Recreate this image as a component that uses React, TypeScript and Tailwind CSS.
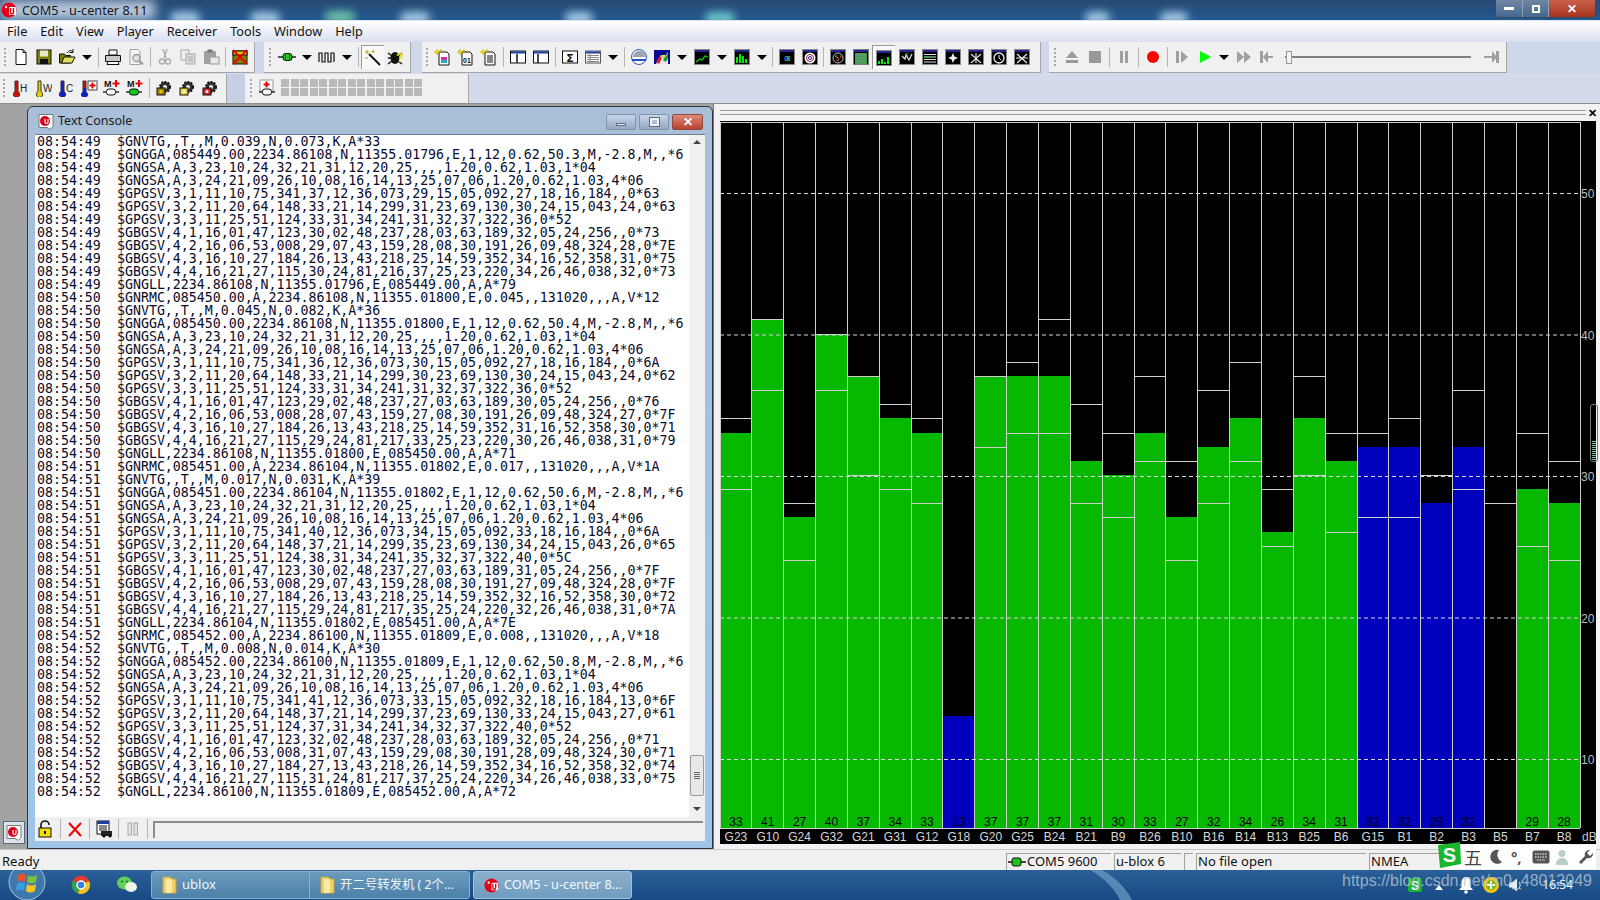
import React from "react";

const GSA1 = "$GNGSA,A,3,23,10,24,32,21,31,12,20,25,,,,1.20,0.62,1.03,1*04";
const GSA2 = "$GNGSA,A,3,24,21,09,26,10,08,16,14,13,25,07,06,1.20,0.62,1.03,4*06";

const logLines: [string, string][] = [
  ["08:54:49", "$GNVTG,,T,,M,0.039,N,0.073,K,A*33"],
  ["08:54:49", "$GNGGA,085449.00,2234.86108,N,11355.01796,E,1,12,0.62,50.3,M,-2.8,M,,*6"],
  ["08:54:49", GSA1],
  ["08:54:49", GSA2],
  ["08:54:49", "$GPGSV,3,1,11,10,75,341,37,12,36,073,29,15,05,092,27,18,16,184,,0*63"],
  ["08:54:49", "$GPGSV,3,2,11,20,64,148,33,21,14,299,31,23,69,130,30,24,15,043,24,0*63"],
  ["08:54:49", "$GPGSV,3,3,11,25,51,124,33,31,34,241,31,32,37,322,36,0*52"],
  ["08:54:49", "$GBGSV,4,1,16,01,47,123,30,02,48,237,28,03,63,189,32,05,24,256,,0*73"],
  ["08:54:49", "$GBGSV,4,2,16,06,53,008,29,07,43,159,28,08,30,191,26,09,48,324,28,0*7E"],
  ["08:54:49", "$GBGSV,4,3,16,10,27,184,26,13,43,218,25,14,59,352,34,16,52,358,31,0*75"],
  ["08:54:49", "$GBGSV,4,4,16,21,27,115,30,24,81,216,37,25,23,220,34,26,46,038,32,0*73"],
  ["08:54:49", "$GNGLL,2234.86108,N,11355.01796,E,085449.00,A,A*79"],
  ["08:54:50", "$GNRMC,085450.00,A,2234.86108,N,11355.01800,E,0.045,,131020,,,A,V*12"],
  ["08:54:50", "$GNVTG,,T,,M,0.045,N,0.082,K,A*36"],
  ["08:54:50", "$GNGGA,085450.00,2234.86108,N,11355.01800,E,1,12,0.62,50.4,M,-2.8,M,,*6"],
  ["08:54:50", GSA1],
  ["08:54:50", GSA2],
  ["08:54:50", "$GPGSV,3,1,11,10,75,341,36,12,36,073,30,15,05,092,27,18,16,184,,0*6A"],
  ["08:54:50", "$GPGSV,3,2,11,20,64,148,33,21,14,299,30,23,69,130,30,24,15,043,24,0*62"],
  ["08:54:50", "$GPGSV,3,3,11,25,51,124,33,31,34,241,31,32,37,322,36,0*52"],
  ["08:54:50", "$GBGSV,4,1,16,01,47,123,29,02,48,237,27,03,63,189,30,05,24,256,,0*76"],
  ["08:54:50", "$GBGSV,4,2,16,06,53,008,28,07,43,159,27,08,30,191,26,09,48,324,27,0*7F"],
  ["08:54:50", "$GBGSV,4,3,16,10,27,184,26,13,43,218,25,14,59,352,31,16,52,358,30,0*71"],
  ["08:54:50", "$GBGSV,4,4,16,21,27,115,29,24,81,217,33,25,23,220,30,26,46,038,31,0*79"],
  ["08:54:50", "$GNGLL,2234.86108,N,11355.01800,E,085450.00,A,A*71"],
  ["08:54:51", "$GNRMC,085451.00,A,2234.86104,N,11355.01802,E,0.017,,131020,,,A,V*1A"],
  ["08:54:51", "$GNVTG,,T,,M,0.017,N,0.031,K,A*39"],
  ["08:54:51", "$GNGGA,085451.00,2234.86104,N,11355.01802,E,1,12,0.62,50.6,M,-2.8,M,,*6"],
  ["08:54:51", GSA1],
  ["08:54:51", GSA2],
  ["08:54:51", "$GPGSV,3,1,11,10,75,341,40,12,36,073,34,15,05,092,33,18,16,184,,0*6A"],
  ["08:54:51", "$GPGSV,3,2,11,20,64,148,37,21,14,299,35,23,69,130,34,24,15,043,26,0*65"],
  ["08:54:51", "$GPGSV,3,3,11,25,51,124,38,31,34,241,35,32,37,322,40,0*5C"],
  ["08:54:51", "$GBGSV,4,1,16,01,47,123,30,02,48,237,27,03,63,189,31,05,24,256,,0*7F"],
  ["08:54:51", "$GBGSV,4,2,16,06,53,008,29,07,43,159,28,08,30,191,27,09,48,324,28,0*7F"],
  ["08:54:51", "$GBGSV,4,3,16,10,27,184,26,13,43,218,25,14,59,352,32,16,52,358,30,0*72"],
  ["08:54:51", "$GBGSV,4,4,16,21,27,115,29,24,81,217,35,25,24,220,32,26,46,038,31,0*7A"],
  ["08:54:51", "$GNGLL,2234.86104,N,11355.01802,E,085451.00,A,A*7E"],
  ["08:54:52", "$GNRMC,085452.00,A,2234.86100,N,11355.01809,E,0.008,,131020,,,A,V*18"],
  ["08:54:52", "$GNVTG,,T,,M,0.008,N,0.014,K,A*30"],
  ["08:54:52", "$GNGGA,085452.00,2234.86100,N,11355.01809,E,1,12,0.62,50.8,M,-2.8,M,,*6"],
  ["08:54:52", GSA1],
  ["08:54:52", GSA2],
  ["08:54:52", "$GPGSV,3,1,11,10,75,341,41,12,36,073,33,15,05,092,32,18,16,184,13,0*6F"],
  ["08:54:52", "$GPGSV,3,2,11,20,64,148,37,21,14,299,37,23,69,130,33,24,15,043,27,0*61"],
  ["08:54:52", "$GPGSV,3,3,11,25,51,124,37,31,34,241,34,32,37,322,40,0*52"],
  ["08:54:52", "$GBGSV,4,1,16,01,47,123,32,02,48,237,28,03,63,189,32,05,24,256,,0*71"],
  ["08:54:52", "$GBGSV,4,2,16,06,53,008,31,07,43,159,29,08,30,191,28,09,48,324,30,0*71"],
  ["08:54:52", "$GBGSV,4,3,16,10,27,184,27,13,43,218,26,14,59,352,34,16,52,358,32,0*74"],
  ["08:54:52", "$GBGSV,4,4,16,21,27,115,31,24,81,217,37,25,24,220,34,26,46,038,33,0*75"],
  ["08:54:52", "$GNGLL,2234.86100,N,11355.01809,E,085452.00,A,A*72"],
];

// name, value, colour (g / b / k), upper marker, lower marker (dB)
const sats: [string, number, string, number, number][] = [
  ["G23", 33, "g", 34, 29], ["G10", 41, "g", 41, 36], ["G24", 27, "g", 28, 24],
  ["G32", 40, "g", 40, 36], ["G21", 37, "g", 37, 30], ["G31", 34, "g", 35, 29],
  ["G12", 33, "g", 34, 28], ["G18", 13, "b", 0, 0], ["G20", 37, "g", 37, 32],
  ["G25", 37, "g", 38, 33], ["B24", 37, "g", 41, 33], ["B21", 31, "g", 35, 28],
  ["B9", 30, "g", 33, 27], ["B26", 33, "g", 37, 31], ["B10", 27, "g", 31, 24],
  ["B16", 32, "g", 36, 28], ["B14", 34, "g", 38, 31], ["B13", 26, "g", 29, 25],
  ["B25", 34, "g", 37, 30], ["B6", 31, "g", 33, 26], ["G15", 32, "b", 33, 27],
  ["B1", 32, "b", 34, 27], ["B2", 28, "b", 30, 0], ["B3", 32, "b", 36, 29],
  ["B5", 0, "k", 28, 0], ["B7", 29, "g", 33, 25], ["B8", 28, "g", 31, 24],
];

const dbY = (v: number) => Math.round(475 - (v - 30) * 14.15);
const sans = "font-['Liberation_Sans',Arial,sans-serif]";
const ui = "font-['Noto_Sans',sans-serif]";

const Ico = ({ children, w = 18 }: { children: React.ReactNode; w?: number }) => (
  <svg width={w} height={18} viewBox={`0 0 ${w} 18`} className="block">
    {children}
  </svg>
);

const Btn = ({ children, active }: { children: React.ReactNode; active?: boolean }) => (
  <div className={`w-[23px] h-[24px] shrink-0 flex items-center justify-center ${active ? "border-t border-l border-[#9a9a9a] bg-[#f8f8f8]" : ""}`}>
    {children}
  </div>
);
const Arrow = () => (
  <div className="w-[17px] shrink-0 flex justify-center">
    <div className="w-0 h-0 border-x-[5px] border-x-transparent border-t-[5px] border-t-black" />
  </div>
);
const Sep = ({ narrow }: { narrow?: boolean }) => (
  <div className={`${narrow ? "w-[5px]" : "w-[6px]"} h-[20px] shrink-0 flex justify-center`}>
    <div className="w-px h-full bg-[#b4b4b4]" />
  </div>
);
const Grip = ({ w }: { w: string }) => (
  <div className={`${w} shrink-0 flex justify-center`}>
    <div className="w-[2px] h-[18px] border-l-2 border-dotted border-[#a8a8a8]" />
  </div>
);

const Thermo = ({ c, label }: { c: string; label: string }) => (
  <Ico>
    <path d="M4 2h3v10.5a3.2 3.2 0 1 1-3 0z" fill={c} stroke="#333" strokeWidth="1" />
    <text x="9" y="13" fontSize="10" fill="#222" fontFamily="Liberation Sans">{label}</text>
  </Ico>
);
const Res = ({ c = "#0c0", x = 0, y = 9 }: { c?: string; x?: number; y?: number }) => (
  <g transform={`translate(${x} ${y})`}>
    <path d="M0 4h16" stroke="#222" strokeWidth="1.4" />
    <rect x="3.5" y="1" width="9" height="6" rx="2.5" fill={c} stroke="#111" />
  </g>
);
const MPlus = ({ c }: { c: string }) => (
  <Ico>
    <text x="1" y="8" fontSize="9" fontWeight="700" fill="#111" fontFamily="Liberation Sans">M</text>
    <path d="M13 1v7M9.5 4.500h7" stroke="#e00" strokeWidth="2" />
    <Res c={c} y={9} />
  </Ico>
);
const Gear = ({ c, dot }: { c: string; dot: string }) => (
  <Ico>
    <circle cx="10" cy="8" r="5" fill="#333" stroke="#111" strokeWidth="2" strokeDasharray="2 1.2" />
    <circle cx="10" cy="8" r="2" fill="#eee" />
    <rect x="2" y="9" width="8" height="7" fill={c} stroke="#111" />
    <circle cx="6" cy="12.500" r="1.500" fill={dot} />
  </Ico>
);
const DarkWin = ({ children, w = 16, frame = "#8a8a8a" }: { children: React.ReactNode; w?: number; frame?: string }) => (
  <Ico w={w}>
    <rect x=".5" y="1.500" width={w - 1} height="15" fill="#000" stroke={frame} />
    <rect x="1" y="2" width={w - 2} height="2" fill="#24248f" />
    {children}
  </Ico>
);
const Page = ({ children }: { children: React.ReactNode }) => (
  <Ico>
    <path d="M5 4h8l2 2v11H5z" fill="#fff" stroke="#111" />
    <path d="M3 1l1 2 2 1-2 1-1 2-1-2-2-1 2-1zM7 1l.5 1 1 .5-1 .5-.5 1-.5-1-1-.5 1-.5z" fill="#e6d800" stroke="#b0a000" strokeWidth=".3" />
    {children}
  </Ico>
);
const Pane = ({ x1, x2 }: { x1: number; x2: number }) => (
  <Ico>
    <rect x="1.500" y="3" width="15" height="12" fill="#fff" stroke="#111" />
    <rect x="2" y="3.500" width="14" height="2" fill="#1b3fa0" />
    <path d={`M${x1} 6v9M${x2} 6v9`} stroke="#111" />
  </Ico>
);

const UBadge = ({ s = 15 }: { s?: number }) => (
  <svg width={s} height={s} viewBox="0 0 16 16" className="block shrink-0">
    <circle cx="8" cy="8" r="7.500" fill="#e8001a" />
    <rect x="8" y="5" width="7" height="8" fill="#fff" rx="1" />
    <path d="M9.500 6v4.500a1.500 1.500 0 0 0 3 0V6" fill="none" stroke="#d00" strokeWidth="1.400" />
    <circle cx="5" cy="5" r="1.200" fill="#fff" />
  </svg>
);
const ConsoleIcon = () => (
  <svg width="18" height="18" viewBox="0 0 18 18" className="block shrink-0">
    <path d="M2 1.500h14v12l-3 3-3-2H2z" fill="#fff" stroke="#777" />
    <circle cx="8" cy="8" r="5" fill="#d8001c" />
    <path d="M8 6v3a1.500 1.500 0 0 0 3 0V6" fill="none" stroke="#fff" strokeWidth="1.200" />
  </svg>
);
const Folder = () => (
  <svg width="15" height="20" viewBox="0 0 15 20" className="block shrink-0">
    <path d="M1 2h7l2 2h4v14H1z" fill="#f2d16b" stroke="#c9a23a" />
    <path d="M4 4h6v14H4z" fill="#fbeaa2" />
  </svg>
);

const Toolbar1 = () => (
  <div className="h-[31px] flex items-stretch bg-[#d4dbec]">
    <div className="w-[255px] bg-[#f0f0f0] border-b border-r border-[#a6a6a6] flex items-center">
      <Grip w="w-[9px]" />
      <Btn><Ico><path d="M4 1.500h7l3 3v12H4z" fill="#fff" stroke="#111" /><path d="M11 1.500v3h3" fill="none" stroke="#111" /></Ico></Btn>
      <Btn><Ico><rect x="2" y="2" width="14" height="14" fill="#808000" stroke="#111" /><rect x="5" y="2.500" width="8" height="6" fill="#e8e8d0" /><rect x="5" y="11" width="8" height="5" fill="#111" /></Ico></Btn>
      <Btn><Ico><path d="M1.500 6h5l1 1.500h5V15H1.500z" fill="#808000" stroke="#111" /><path d="M3.500 15l2.500-6h11l-3 6z" fill="#e0e060" stroke="#111" /><path d="M9 5c2-3 4-3 6-1M15 1v3.500h-3.500" fill="none" stroke="#111" /></Ico></Btn>
      <Arrow />
      <Sep />
      <Btn><Ico><path d="M5 2h8v5H5z" fill="#fff" stroke="#111" /><path d="M1.500 7.500h15v6h-15z" fill="#c8c8c8" stroke="#111" /><path d="M4 13.500h10l1 3H3z" fill="#fff" stroke="#111" /></Ico></Btn>
      <Btn><Ico><path d="M3 1.500h8l2 2v13H3z" fill="#f4f4f4" stroke="#a0a0a0" /><circle cx="9.500" cy="10" r="3.500" fill="#e0e0e0" stroke="#999" strokeWidth="1.300" /><path d="M12 12.500l4 4" stroke="#999" strokeWidth="2" /></Ico></Btn>
      <Sep />
      <Btn><Ico><path d="M7 1l3 9M11 1l-3 9" stroke="#a8a8a8" strokeWidth="1.300" /><circle cx="6" cy="13.500" r="2.500" fill="none" stroke="#a8a8a8" strokeWidth="1.300" /><circle cx="12" cy="13.500" r="2.500" fill="none" stroke="#a8a8a8" strokeWidth="1.300" /></Ico></Btn>
      <Btn><Ico><rect x="2" y="2" width="8" height="10" fill="#eee" stroke="#a8a8a8" /><rect x="7" y="6" width="9" height="10" fill="#ddd" stroke="#a8a8a8" /><path d="M9 9h5M9 11h5M9 13h5" stroke="#a8a8a8" /></Ico></Btn>
      <Btn><Ico><rect x="2" y="3" width="12" height="13" rx="1" fill="#a0a0a0" /><rect x="5.500" y="1.500" width="5" height="3" fill="#777" /><rect x="8" y="9" width="9" height="7" fill="#e8e8e8" stroke="#999" /></Ico></Btn>
      <Sep />
      <Btn><Ico><rect x="2" y="3" width="14" height="13" fill="#808000" stroke="#111" /><rect x="2" y="3" width="14" height="4" fill="#e6c800" stroke="#111" /><path d="M2 2l14 14M16 2L2 16" stroke="#e00" strokeWidth="1.800" /></Ico></Btn>
    </div>
    <div className="w-[9px] bg-[#cfd7ea]" />
    <div className="w-[147px] bg-[#f0f0f0] border-b border-r border-[#a6a6a6] flex items-center">
      <Grip w="w-[11px]" />
      <Btn><Ico><path d="M0 9h18" stroke="#555" strokeWidth="2" /><rect x="5" y="5.500" width="9" height="7" rx="2.500" fill="#2cc22c" stroke="#111" /><path d="M7.500 6v6M11.500 6v6" stroke="#066" /></Ico></Btn>
      <Arrow />
      <Btn><Ico><path d="M1 14V5h3v9h3V5h3v9h3V5h3v9" fill="none" stroke="#111" strokeWidth="1.200" /></Ico></Btn>
      <Arrow />
      <Sep />
      <Btn active><Ico><path d="M5 5l11 11" stroke="#111" strokeWidth="2" /><path d="M3 1v4M1 3h4M9 1v3M7.500 2.500h3M1 9h3" stroke="#c0a000" /></Ico></Btn>
      <Btn><Ico><ellipse cx="8" cy="10" rx="4.500" ry="6" fill="#111" /><path d="M1 5l4 3M1 10h4M1 16l4-3M15 5l-4 3M15 16l-4-3" stroke="#111" strokeWidth="1.300" /><text x="9" y="14" fontSize="13" fontWeight="700" fill="#f0e000" fontFamily="Liberation Sans">?</text></Ico></Btn>
    </div>
    <div className="w-[11px] bg-[#cfd7ea]" />
    <div className="w-[619px] bg-[#f0f0f0] border-b border-r border-[#a6a6a6] flex items-center">
      <Grip w="w-[9px]" />
      <Btn><Page><rect x="7" y="9" width="6" height="6" fill="#d030b0" /><rect x="7" y="12" width="6" height="3" fill="#20b0c0" /></Page></Btn>
      <Btn><Page><text x="6" y="15" fontSize="7" fontWeight="700" fill="#111" fontFamily="Liberation Sans">01</text></Page></Btn>
      <Btn><Page><path d="M7 8h6M7 10h6M7 12h6M7 14h6" stroke="#111" /></Page></Btn>
      <Sep />
      <Btn><Pane x1={8} x2={8} /></Btn>
      <Btn><Pane x1={6} x2={6} /></Btn>
      <Sep />
      <Btn><Ico><rect x="1.500" y="3" width="15" height="12" fill="#fff" stroke="#111" /><text x="9" y="13.500" textAnchor="middle" fontSize="11" fontWeight="700" fill="#111" fontFamily="DejaVu Sans">Σ</text></Ico></Btn>
      <Btn><Ico><rect x="1.500" y="3" width="15" height="12" fill="#fff" stroke="#555" /><rect x="2" y="3.500" width="14" height="2" fill="#1b3fa0" /><path d="M3 7.500h12M3 9.500h12M3 11.500h12M3 13.500h12M6 6v9" stroke="#888" /></Ico></Btn>
      <Arrow />
      <Sep />
      <Btn><Ico><circle cx="9" cy="9" r="7.500" fill="#fff" stroke="#2a5bc0" /><path d="M3 8c2-6 9-7 12-2l1 3H2z" fill="#a0a4a8" /><path d="M2 12h14" stroke="#1d4fd0" strokeWidth="2" /></Ico></Btn>
      <Btn><Ico><rect x="1" y="2" width="16" height="14" fill="#0a0a90" /><path d="M3 16L8 7l3 3 4-6v12z" fill="#e8e8e8" /><path d="M3 14l4-6 2 2-3 6z" fill="#e02020" /><path d="M10 12l5-7v5l-2 4z" fill="#10a020" /><path d="M8 7l3 3 2-3z" fill="#f0e020" /></Ico></Btn>
      <Arrow />
      <Btn><DarkWin><path d="M2 14l4-3 2 1 3-4 3 1" fill="none" stroke="#1c1" strokeWidth="1.300" /></DarkWin></Btn>
      <Arrow />
      <Btn><DarkWin><path d="M3 15V9M6 15V6M9 15V8M12 15v-4" stroke="#0e0" strokeWidth="2" /></DarkWin></Btn>
      <Arrow />
      <Sep narrow />
      <Btn><DarkWin><rect x="6" y="8" width="5" height="5" fill="#12a040" /><rect x="5" y="9" width="3" height="3" fill="#2030c0" /></DarkWin></Btn>
      <Btn><DarkWin><circle cx="8" cy="10" r="5.500" fill="#fff" /><circle cx="8" cy="10" r="3.500" fill="none" stroke="#a22" /><circle cx="8" cy="10" r="1.500" fill="none" stroke="#22a" /></DarkWin></Btn>
      <Sep narrow />
      <Btn><DarkWin><circle cx="8" cy="10" r="5" fill="none" stroke="#bbb" /><path d="M5 8l2 2M10 7l1 3M6 12l3 1" stroke="#e33" /><path d="M6 7l3 5" stroke="#3c3" /></DarkWin></Btn>
      <Btn><DarkWin frame="#7a7a7a"><rect x="2" y="5" width="12" height="11" fill="#4c9a4c" /><path d="M3 7h10M3 10h10M3 13h10" stroke="#7aa" strokeDasharray="1 1" /></DarkWin></Btn>
      <Btn active><DarkWin><path d="M3 15v-3M6 15v-5M9 15v-2M12 15V8" stroke="#0e0" strokeWidth="2" /></DarkWin></Btn>
      <Btn><DarkWin><path d="M3 8l3 3 1-4 3 5 3-6" stroke="#ddd" strokeWidth="1.300" fill="none" /><path d="M8 5v4" stroke="#2d2" /></DarkWin></Btn>
      <Btn><DarkWin><path d="M2 6.500h12M2 9h12M2 11.500h12M2 14h12" stroke="#ddd" /><path d="M2 9h6" stroke="#2c2" /></DarkWin></Btn>
      <Btn><DarkWin><path d="M8 5l1.500 3.500L13 10l-3.500 1.500L8 15l-1.500-3.500L3 10l3.500-1.500z" fill="#eee" /></DarkWin></Btn>
      <Btn><DarkWin><path d="M3 6l10 9M13 6L3 15M8 5v10" stroke="#ddd" strokeWidth="1.200" /></DarkWin></Btn>
      <Btn><DarkWin><circle cx="8" cy="10" r="5" fill="none" stroke="#eee" strokeWidth="1.300" /><path d="M8 7v3l2 2" stroke="#eee" /></DarkWin></Btn>
      <Btn><DarkWin><path d="M3 6l10 9M13 6L3 15M2 10h12" stroke="#eee" strokeWidth="1.200" /></DarkWin></Btn>
    </div>
    <div className="w-[8px] bg-[#cfd7ea]" />
    <div className="w-[458px] bg-[#f0f0f0] border-b border-r border-[#a6a6a6] flex items-center">
      <Grip w="w-[11px]" />
      <Btn><Ico><path d="M9 3l6 7H3zM3 12h12v3H3z" fill="#999" /></Ico></Btn>
      <Btn><Ico><rect x="3" y="3" width="12" height="12" fill="#999" /></Ico></Btn>
      <Sep />
      <Btn><Ico><path d="M5 3h3v12H5zM10 3h3v12h-3z" fill="#a0a0a0" /></Ico></Btn>
      <Sep />
      <Btn><Ico><circle cx="9" cy="9" r="6" fill="#f00" /></Ico></Btn>
      <Sep />
      <Btn><Ico><path d="M3 3h3v12H3zM8 3l7 6-7 6z" fill="#a0a0a0" /></Ico></Btn>
      <Btn><Ico><path d="M4 3l11 6-11 6z" fill="#0f0" /></Ico></Btn>
      <div className="w-[15px] shrink-0 flex justify-center">
        <div className="w-0 h-0 border-x-[5px] border-x-transparent border-t-[5px] border-t-black" />
      </div>
      <Btn><Ico><path d="M3 3l7 6-7 6zM10 3l7 6-7 6z" fill="#a0a0a0" /></Ico></Btn>
      <Btn><Ico><path d="M3 3h3v12H3zM16 8v2H11v5L6 9l5-6v5z" fill="#a0a0a0" /></Ico></Btn>
      <div className="w-[202px] h-[24px] shrink-0 pl-[8px] pr-[8px] flex items-center relative">
        <div className="w-full h-[2px] bg-[#808080]" />
        <div className="absolute left-[9px] top-[6px] w-[6px] h-[13px] bg-[#f2f2f2] border border-[#999]" />
      </div>
      <Btn><Ico><path d="M2 8h8V3l5 6-5 6v-5H2zM14 3h3v12h-3z" fill="#a0a0a0" /></Ico></Btn>
    </div>
    <div className="flex-1 bg-[#cfd7ea]" />
  </div>
);

const Toolbar2 = () => (
  <div className="h-[29px] mt-[1px] flex items-stretch bg-[#d3daec]">
    <div className="w-[227px] bg-[#f0f0f0] border-r border-[#a6a6a6] flex items-center pb-[2px]">
      <Grip w="w-[8px]" />
      <Btn><Thermo c="#d01010" label="H" /></Btn>
      <Btn><Thermo c="#e0d000" label="W" /></Btn>
      <Btn><Thermo c="#1020d0" label="C" /></Btn>
      <Btn><Ico><path d="M3 2h3v11a3 3 0 1 1-3 0z" fill="#d01010" stroke="#333" /><path d="M3 9h3v4a3 3 0 1 1-3 0z" fill="#1020d0" /><rect x="8" y="2" width="9" height="9" fill="#fff" stroke="#444" /><path d="M12.500 3.500v6M9.500 6.500h6" stroke="#e00" strokeWidth="2" /></Ico></Btn>
      <Btn><MPlus c="#f4f4f4" /></Btn>
      <Btn><MPlus c="#14c814" /></Btn>
      <Sep />
      <Btn><Gear c="#a08000" dot="#e8d000" /></Btn>
      <Btn><Gear c="#e8d040" dot="#fff" /></Btn>
      <Btn><Gear c="#d02020" dot="#fff" /></Btn>
    </div>
    <div className="w-[18px] bg-[#c6cfe4]" />
    <div className="w-[224px] bg-[#f0f0f0] border-r border-[#a6a6a6] flex items-center pl-[2px] pb-[2px]">
      <Grip w="w-[8px]" />
      <Btn><Ico><rect x="2" y="1" width="13" height="11" fill="#fff" stroke="#999" /><path d="M8.500 2.500v6M5.500 5.500h6" stroke="#e00" strokeWidth="2" /><Res c="#f4f4f4" x={1} y={9} /></Ico></Btn>
      <div className="grid grid-cols-[repeat(15,8px)] gap-x-[1.500px] gap-y-[1px] ml-[3px]">
        {Array.from({ length: 30 }).map((_, i) => (
          <div key={i} className="w-[8px] h-[8px] bg-[#b9b9b9]" />
        ))}
      </div>
    </div>
    <div className="flex-1" />
  </div>
);

const menus = ["File", "Edit", "View", "Player", "Receiver", "Tools", "Window", "Help"];

const ConsoleWindow = () => (
  <div className="w-[686px] mt-[2px] flex flex-col rounded-t-[6px] border border-[#2b3442] bg-gradient-to-b from-[#a9bfd8] to-[#9ec5e8] px-[7px] pb-[7px]">
    <div className="h-[27px] shrink-0 flex items-center pl-[2px] pt-[2px] relative">
      <ConsoleIcon />
      <span className={`ml-[3px] text-[12.500px] text-[#1a1a1a] ${ui}`}>Text Console</span>
      <div className="ml-auto mr-[2px] flex gap-[3px]">
        <div className="w-[30px] h-[16px] rounded-[2px] border border-[#7f93ad] bg-gradient-to-b from-[#c6d5e8] to-[#94a9c4] flex items-end justify-center pb-[3px]">
          <div className="w-[10px] h-[3px] bg-[#f2f2f2] border border-[#5c6a7c]" />
        </div>
        <div className="w-[30px] h-[16px] rounded-[2px] border border-[#7f93ad] bg-gradient-to-b from-[#c6d5e8] to-[#94a9c4] flex items-center justify-center">
          <div className="w-[9px] h-[8px] border-2 border-[#f2f2f2] outline outline-1 outline-[#5c6a7c]" />
        </div>
        <div className="w-[31px] h-[16px] rounded-[2px] border border-[#8e4a40] bg-gradient-to-b from-[#dc8a78] to-[#b8402c] flex items-center justify-center text-white text-[12px] font-bold leading-none">
          ✕
        </div>
      </div>
    </div>
    <div className="flex-1 min-h-0 flex flex-col bg-white border-t border-[#6f7f92]">
      <div className="flex-1 min-h-0 flex">
        <div className="flex-1 min-w-0 overflow-hidden pl-[2px] text-[13.250px] leading-[13px] text-[#0b0b2a] font-['DejaVu_Sans_Mono',monospace]">
          {logLines.map(([t, s], i) => (
            <div key={i} className="flex h-[13px] whitespace-pre">
              <span className="w-[80px] shrink-0">{t}</span>
              <span>{s}</span>
            </div>
          ))}
        </div>
        <div className="w-[16px] shrink-0 bg-[#f0f0f0] flex flex-col items-center pt-[5px] pb-[6px]">
          <div className="w-0 h-0 border-x-[4px] border-x-transparent border-b-[4px] border-b-[#444]" />
          <div className="mt-auto w-[14px] h-[41px] bg-[#e8e8e8] border border-[#9a9a9a] rounded-[2px] flex flex-col items-center justify-center gap-[1px] mb-[11px]">
            <div className="w-[6px] h-px bg-[#666]" />
            <div className="w-[6px] h-px bg-[#666]" />
            <div className="w-[6px] h-px bg-[#666]" />
            <div className="w-[6px] h-px bg-[#666]" />
          </div>
          <div className="w-0 h-0 border-x-[4px] border-x-transparent border-t-[4px] border-t-[#444]" />
        </div>
      </div>
      <div className="h-[24px] shrink-0 bg-[#f0f0f0] flex items-center pl-[1px]">
        <div className="w-[24px] flex justify-center ml-[-3px]"><Ico><path d="M5 8V5a4 4 0 0 1 8 0" fill="none" stroke="#111" strokeWidth="1.600" /><rect x="3" y="8" width="12" height="9" fill="#f0e000" stroke="#111" /><rect x="8" y="11" width="2" height="3" fill="#111" /></Ico></div>
        <Sep />
        <div className="w-[23px] flex justify-center"><Ico><path d="M3 3l12 13M15 3L3 16" stroke="#e00" strokeWidth="2" /></Ico></div>
        <Sep />
        <div className="w-[23px] flex justify-center"><Ico><rect x="2" y="1" width="12" height="13" fill="#fff" stroke="#111" /><rect x="2" y="1" width="12" height="3" fill="#1b3fa0" /><path d="M4 6h8M4 8h8M4 10h8" stroke="#111" /><rect x="6" y="11" width="11" height="5" fill="#222" /><circle cx="9" cy="16" r="1.500" /><circle cx="15" cy="16" r="1.500" /></Ico></div>
        <Sep />
        <div className="w-[23px] flex justify-center"><Ico><rect x="4" y="3" width="3.500" height="12" fill="#e4e4e4" stroke="#a8a8a8" /><rect x="10" y="3" width="3.500" height="12" fill="#e4e4e4" stroke="#a8a8a8" /></Ico></div>
        <Sep />
        <div className="flex-1 h-[17px] ml-[3px] mr-[2px] border-t-2 border-l-2 border-[#8c8c8c] bg-[#f0f0f0]" />
      </div>
    </div>
  </div>
);

const Chart = () => (
  <svg width="876" height="723" viewBox="720 121 876 723" className="block">
    <rect x="720" y="121" width="876" height="723" fill="#000" />
    {sats.map(([name, v, c], i) => {
      const x = 720 + (i * 860) / 27;
      const w = 860 / 27;
      return v > 0 ? (
        <rect key={name} x={x} y={dbY(v)} width={w} height={828 - dbY(v)} fill={c === "b" ? "#0000bd" : "#06b900"} shapeRendering="crispEdges" />
      ) : null;
    })}
    {[50, 40, 30, 20, 10].map((d) => (
      <g key={d}>
        <line x1="720" x2="1580" y1={476 - (d - 30) * 14.15 + 0.5} y2={476 - (d - 30) * 14.15 + 0.5} stroke="#d8d8d8" strokeDasharray="4 3" />
        <text x="1581" y={481 - (d - 30) * 14.15} fontSize="12" fill="#bdbdbd" fontFamily="Liberation Sans">{d}</text>
      </g>
    ))}
    {sats.map(([name, , , up, low], i) => {
      const x = 720 + (i * 860) / 27;
      const x2 = x + 860 / 27;
      return (
        <g key={name} stroke="#cfcfcf" shapeRendering="crispEdges">
          {up > 0 && <line x1={x} x2={x2} y1={dbY(up) + 0.5} y2={dbY(up) + 0.5} />}
          {low > 0 && <line x1={x} x2={x2} y1={dbY(low) + 0.5} y2={dbY(low) + 0.5} />}
          <line x1={x2} x2={x2} y1="122" y2="828" />
        </g>
      );
    })}
    <g stroke="#cfcfcf" shapeRendering="crispEdges">
      <line x1="720" x2="1580" y1="122.500" y2="122.500" />
      <line x1="720" x2="1580" y1="828.500" y2="828.500" />
      <line x1="720.500" x2="720.500" y1="122" y2="828" />
    </g>
    {sats.map(([name, v], i) => {
      const cx = 720 + ((i + 0.5) * 860) / 27;
      return (
        <g key={name} textAnchor="middle" fontSize="12" fontFamily="Liberation Sans">
          {v > 0 && <text x={cx} y="826" fill="#000">{v}</text>}
          <text x={cx} y="841" fill="#d8d8d8">{name}</text>
        </g>
      );
    })}
    <text x="1582" y="841" fontSize="12" fill="#c8c8c8" fontFamily="Liberation Sans">dB</text>
  </svg>
);

const StatusCell = ({ w, children }: { w: string; children?: React.ReactNode }) => (
  <div className={`${w} h-[17px] shrink-0 border-t border-l border-[#a0a0a0] flex items-center pl-[1px] text-[13px] text-[#111] ${ui}`}>
    {children}
  </div>
);

const Taskbar = () => (
  <div className="h-[30px] shrink-0 relative flex items-center bg-gradient-to-b from-[#2a5f98] to-[#174a84] overflow-hidden">
    <svg width="60" height="30" viewBox="0 0 60 30" className="absolute left-[1090px] top-0">
      <path d="M0 0h12c14 8 24 18 30 30H30C24 18 14 8 0 0z" fill="#6f9cc4" opacity=".7" />
    </svg>
    <div className="w-[54px] flex justify-center shrink-0 relative">
      <svg width="38" height="38" viewBox="0 0 38 38" className="block mt-[-6px]">
        <circle cx="19" cy="19" r="18" fill="#3f78ad" stroke="#a5c4dd" />
        <path d="M10 12c3-2 6-2 8 0l-1 7c-3-2-6-2-8 0z" fill="#e8542a" />
        <path d="M20 12c3 2 6 2 9 0l-1 7c-3 2-6 2-9 0z" fill="#7cc13a" />
        <path d="M9 21c3-2 5-2 8 0l-1 7c-3-2-6-2-8 0z" fill="#35a0e0" />
        <path d="M19 21c3 2 6 2 9 0l-1 7c-3 2-6 2-9 0z" fill="#f6c51e" />
      </svg>
    </div>
    <div className="w-[46px] ml-[4px] flex justify-center shrink-0">
      <svg width="20" height="20" viewBox="0 0 20 20" className="block">
        <circle cx="10" cy="10" r="9" fill="#e33b2e" />
        <path d="M10 10L2 5.500A9 9 0 0 1 18 6z" fill="#e33b2e" />
        <path d="M10 10l-3 8.500A9 9 0 0 1 2 5.500z" fill="#2da44a" />
        <path d="M10 10l8-4a9 9 0 0 1-11 12.500z" fill="#f3c11c" />
        <circle cx="10" cy="10" r="4" fill="#3d7fe0" stroke="#fff" strokeWidth="1.500" />
      </svg>
    </div>
    <div className="w-[46px] flex justify-center shrink-0">
      <svg width="22" height="20" viewBox="0 0 22 20" className="block">
        <ellipse cx="8.500" cy="8" rx="7.500" ry="6.500" fill="#61d15a" />
        <ellipse cx="15" cy="12" rx="6" ry="5" fill="#eef6ea" />
        <circle cx="6" cy="6.500" r="1" fill="#2a6a2a" />
        <circle cx="11" cy="6.500" r="1" fill="#2a6a2a" />
      </svg>
    </div>
    <div className="w-[319px] h-[28px] ml-[1px] shrink-0 flex rounded-[3px] border border-[#89b0cd] bg-gradient-to-b from-[#6b9cbd] to-[#4b80a8]">
      <div className="w-[158px] flex items-center pl-[10px] gap-[5px] border-r border-[#8bb0cc]">
        <Folder />
        <span className={`text-[13px] text-[#f2f6fa] ${ui}`}>ublox</span>
      </div>
      <div className="flex-1 flex items-center pl-[10px] gap-[5px]">
        <Folder />
        <span className="text-[12.400px] text-[#f2f6fa] whitespace-nowrap font-['Noto_Sans','Noto_Sans_CJK_SC',sans-serif]">开二号转发机 ( 2个...</span>
      </div>
    </div>
    <div className="w-[159px] h-[28px] ml-[3px] shrink-0 flex items-center pl-[10px] gap-[5px] rounded-[3px] border border-[#a5c1d8] bg-gradient-to-b from-[#8bb0cd] to-[#6f9cbf]">
      <UBadge />
      <span className={`text-[12.700px] text-[#f2f6fa] whitespace-nowrap ${ui}`}>COM5 - u-center 8...</span>
    </div>
    <div className="ml-auto mr-[27px] flex items-center text-white">
      <div className="w-[12px] h-0 mr-[13px] flex justify-center"><div className="w-0 h-0 border-x-[4px] border-x-transparent border-b-[5px] border-b-white" /></div>
      <svg width="16" height="18" viewBox="0 0 16 18" className="block mr-[8px]"><path d="M8 1c-3 0-4.500 2.500-4.500 5.500V11L1 14h14l-2.500-3V6.500C12.500 3.500 11 1 8 1z" fill="#fff" /><circle cx="8" cy="16" r="1.800" fill="#fff" /></svg>
      <svg width="18" height="18" viewBox="0 0 18 18" className="block mr-[8px]"><circle cx="9" cy="9" r="8" fill="#f2c40f" /><circle cx="9" cy="9" r="5" fill="#74b816" /><path d="M9 5v8M5 9h8" stroke="#fff" strokeWidth="2" /></svg>
      <svg width="16" height="16" viewBox="0 0 16 16" className="block mr-[18px]"><path d="M1 5.500h3L9 1.500v13L4 10.500H1z" fill="#e8eef4" /><path d="M11 5c1.500 1.500 1.500 4.500 0 6" fill="none" stroke="#e8eef4" /></svg>
      <span className={`text-[12px] text-white ${ui}`}>16:54</span>
    </div>
  </div>
);

export default function App() {
  return (
    <div className="w-[1600px] h-[900px] relative overflow-hidden flex flex-col bg-[#d4dbec]">
      {/* title */}
      <div className="h-[21px] shrink-0 relative overflow-hidden flex items-center bg-gradient-to-b from-[#274a73] to-[#22598f] border-b border-[#dfe8f2]">
        <div className="absolute left-0 top-0 w-[155px] h-full bg-[#b9c9dc] blur-[6px]" />
        <div className="absolute left-[170px] top-[12px] w-[30px] h-[12px] rounded-full bg-[#a9cce6] blur-[4px]" />
        <div className="absolute left-[250px] top-[12px] w-[30px] h-[12px] rounded-full bg-[#a9cce6] blur-[4px]" />
        <div className="absolute left-[325px] top-[11px] w-[30px] h-[12px] rounded-full bg-[#72c2a8] blur-[4px]" />
        <div className="absolute left-[400px] top-[12px] w-[30px] h-[12px] rounded-full bg-[#a9cce6] blur-[4px]" />
        <div className="absolute left-[565px] top-[12px] w-[28px] h-[12px] rounded-full bg-[#a9cce6] blur-[4px]" />
        <div className="absolute left-[705px] top-[12px] w-[30px] h-[12px] rounded-full bg-[#6fc8cc] blur-[4px]" />
        <div className="absolute left-[1085px] top-[12px] w-[25px] h-[12px] rounded-full bg-[#a9cce6] blur-[4px]" />
        <div className="absolute left-[1160px] top-[12px] w-[28px] h-[12px] rounded-full bg-[#a9cce6] blur-[4px]" />
        <div className="relative flex items-center pl-[1px] gap-[5px]">
          <UBadge s={16} />
          <span className={`text-[12.700px] text-[#161616] leading-none ${ui}`}>COM5 - u-center 8.11</span>
        </div>
        <div className="relative ml-auto mr-[4px] h-[18px] self-start flex rounded-b-[4px] border border-t-0 border-[#34495f] overflow-hidden">
          <div className="w-[27px] bg-gradient-to-b from-[#6f87a3] to-[#46688e] flex items-center justify-center border-r border-[#8fa3b8]">
            <div className="w-[10px] h-[3px] bg-white" />
          </div>
          <div className="w-[26px] bg-gradient-to-b from-[#6f87a3] to-[#46688e] flex items-center justify-center border-r border-[#8fa3b8]">
            <div className="w-[8px] h-[8px] border-2 border-white" />
          </div>
          <div className="w-[46px] bg-gradient-to-b from-[#c9604a] to-[#a8331e] flex items-center justify-center text-white text-[12px] font-bold leading-none">
            ✕
          </div>
        </div>
      </div>

      {/* menu */}
      <div className={`h-[21px] shrink-0 flex items-center gap-[13px] pl-[7px] text-[12.700px] text-[#111] bg-gradient-to-b from-[#ffffff] to-[#d9dff0] ${ui}`}>
        {menus.map((m) => (
          <span key={m}>{m}</span>
        ))}
      </div>

      <Toolbar1 />
      <Toolbar2 />

      {/* workspace */}
      <div className="flex-1 min-h-0 flex bg-[#a3a3a3] border-t border-[#8c8c8c]">
        <div className="w-[27px] shrink-0 flex flex-col justify-end pb-[5px] items-center">
          <div className="w-[22px] h-[23px] bg-[#dde4ee] border border-[#5a6a7a] flex items-center justify-center">
            <ConsoleIcon />
          </div>
        </div>
        <ConsoleWindow />
        <div className="flex-1 min-w-0 bg-[#f2f2f2] border-l border-[#777] flex flex-col pl-[6px]">
          <div className="h-[17px] shrink-0 flex items-center pr-[3px] gap-[2px]">
            <div className="flex-1 h-[5px] border-y border-[#9a9a9a]" />
            <span className="text-[11px] font-bold text-black leading-none">✕</span>
          </div>
          <Chart />
        </div>
      </div>

      {/* status */}
      <div className={`h-[21px] shrink-0 flex items-end bg-[#f0f0f0] border-t border-[#c8c8c8] text-[13px] ${ui}`}>
        <span className="pl-[2px] w-[1005px] shrink-0 self-center mt-[3px] text-[#111]">Ready</span>
        <StatusCell w="w-[105px] ml-[1px]">
          <svg width="18" height="10" viewBox="0 0 18 10" className="block mr-[1px]"><path d="M0 5h18" stroke="#111" strokeWidth="1.500" /><rect x="4" y="1" width="9" height="8" rx="2" fill="#1cc41c" stroke="#111" /></svg>
          COM5 9600
        </StatusCell>
        <StatusCell w="w-[67px] ml-[3px]">u-blox 6</StatusCell>
        <StatusCell w="w-[9px] ml-[3px]" />
        <StatusCell w="w-[170px] ml-[3px]">No file open</StatusCell>
        <StatusCell w="w-[70px] ml-[3px]">NMEA</StatusCell>
      </div>

      <Taskbar />

      {/* IME bar + watermark sit over the desktop */}
      <div className="absolute left-[1449px] top-[845px] w-[147px] h-[24px] bg-white/95 flex items-center text-[#555]">
        <span className="absolute left-[15px] text-[18px] leading-none text-[#444] font-['Noto_Sans_CJK_SC',sans-serif]">五</span>
        <svg width="14" height="16" viewBox="0 0 14 16" className="absolute left-[40px]"><path d="M10 1a7 7 0 1 0 3 12A8 8 0 0 1 10 1z" fill="#555" /></svg>
        <span className="absolute left-[62px] text-[15px] font-bold leading-none text-[#555]">°,</span>
        <svg width="18" height="14" viewBox="0 0 18 14" className="absolute left-[83px]"><rect x=".5" y=".5" width="17" height="13" rx="2" fill="#555" /><path d="M3 4h12M3 7h12M5 10h8" stroke="#fff" strokeDasharray="1.500 1" /></svg>
        <svg width="14" height="16" viewBox="0 0 14 16" className="absolute left-[106px]"><circle cx="7" cy="4.500" r="3.500" fill="#b9cfc4" /><path d="M1 16c0-5 2.500-7 6-7s6 2 6 7z" fill="#b9cfc4" /></svg>
        <svg width="16" height="16" viewBox="0 0 16 16" className="absolute left-[129px]"><path d="M15 4l-3 3-3-3 3-3a4.500 4.500 0 0 0-5 6L1 13l2 2 6-6a4.500 4.500 0 0 0 6-5z" fill="#555" /></svg>
      </div>
      <svg width="27" height="28" viewBox="0 0 27 28" className="absolute left-[1435px] top-[841px]">
        <path d="M3 4L25 1l1 22-21 4z" fill="#19b52f" />
        <text x="14.500" y="21" textAnchor="middle" fontSize="20" fontWeight="700" fill="#fff" fontFamily="Liberation Sans">S</text>
      </svg>
      <svg width="16" height="16" viewBox="0 0 16 16" className="absolute left-[1407px] top-[877px]">
        <rect x="1" y="1" width="14" height="14" rx="2" fill="#19b52f" />
        <text x="8" y="13" textAnchor="middle" fontSize="12" fontWeight="700" fill="#fff" fontFamily="Liberation Sans">S</text>
      </svg>
      <span className={`absolute left-[1342px] top-[871px] text-[16px] leading-[19px] whitespace-nowrap text-[#b8c4d0]/80 ${sans}`}>
        https://blog.csdn.net/m0_48012049
      </span>
      {/* desktop gadget peeking over the chart */}
      <div className="absolute left-[1590px] top-[404px] w-[8px] h-[58px] rounded-[3px] border border-[#777] flex flex-col justify-end gap-px pb-[1px] px-px">
        {Array.from({ length: 10 }).map((_, i) => (
          <div key={i} className="h-px bg-[#6fd08a]" />
        ))}
      </div>
    </div>
  );
}
